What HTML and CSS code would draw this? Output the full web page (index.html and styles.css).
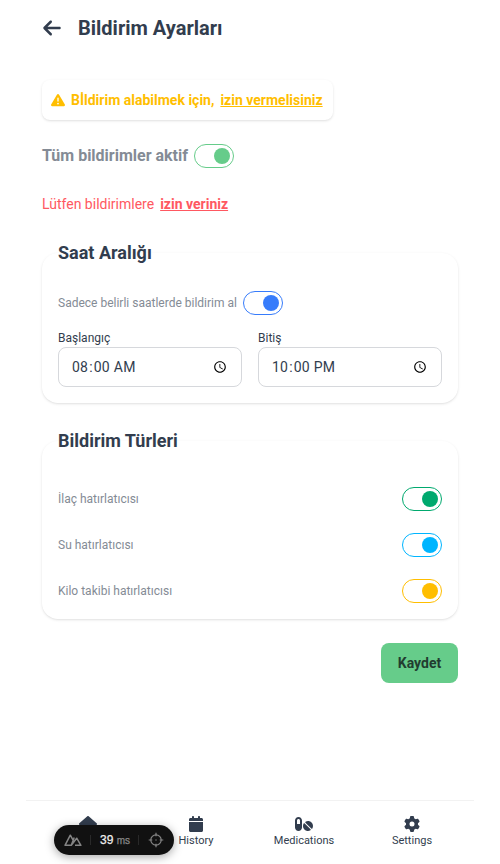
FILE: index.html
```html
<!DOCTYPE html>
<html lang="tr">
<head>
<meta charset="utf-8">
<title>Bildirim Ayarları</title>
<link rel="stylesheet" href="styles.css">
</head>
<body>
<div class="app">
  <header class="header">
    <svg class="back" viewBox="0 0 448 512"><path d="M9.400 233.400c-12.500 12.500-12.500 32.800 0 45.300l160 160c12.500 12.500 32.800 12.500 45.300 0s12.500-32.800 0-45.300L109.200 288 416 288c17.700 0 32-14.300 32-32s-14.300-32-32-32l-306.700 0L214.600 118.600c12.500-12.500 12.500-32.800 0-45.300s-32.800-12.500-45.300 0l-160 160z"/></svg>
    <h1>Bildirim Ayarları</h1>
  </header>
  <main class="content">
    <div class="alert">
      <svg class="warn" viewBox="0 0 512 512"><path d="M256 32c14.200 0 27.300 7.500 34.500 19.800l216 368c7.300 12.400 7.300 27.700 .2 40.100S486.300 480 472 480L40 480c-14.300 0-27.600-7.700-34.700-20.100s-7-27.800 .2-40.100l216-368C228.700 39.500 241.800 32 256 32zm0 128c-13.300 0-24 10.700-24 24l0 112c0 13.300 10.700 24 24 24s24-10.700 24-24l0-112c0-13.300-10.700-24-24-24zm32 224a32 32 0 1 0 -64 0 32 32 0 1 0 64 0z"/></svg>
      <span>Bİldirim alabilmek için,</span>
      <a class="link">izin vermelisiniz</a>
    </div>
    <label class="all"><span>Tüm bildirimler aktif</span><i class="toggle green"></i></label>
    <p class="error"><span>Lütfen bildirimlere</span><a class="link">izin veriniz</a></p>
    <fieldset class="card">
      <legend>Saat Aralığı</legend>
      <label class="row"><span>Sadece belirli saatlerde bildirim al</span><i class="toggle blue"></i></label>
      <div class="times">
        <label class="time"><span>Başlangıç</span><input type="time" value="08:00"></label>
        <label class="time"><span>Bitiş</span><input type="time" value="22:00"></label>
      </div>
    </fieldset>
    <fieldset class="card types">
      <legend>Bildirim Türleri</legend>
      <label class="row spread"><span>İlaç hatırlatıcısı</span><i class="toggle emerald"></i></label>
      <label class="row spread"><span>Su hatırlatıcısı</span><i class="toggle sky"></i></label>
      <label class="row spread"><span>Kilo takibi hatırlatıcısı</span><i class="toggle amber"></i></label>
    </fieldset>
    <button class="save">Kaydet</button>
  </main>
  <nav class="nav">
    <a class="tab"><svg width="18" height="16" viewBox="0 0 576 512"><path d="M575.800 255.500c0 18-15 32.100-32 32.100h-32l.7 160.200c0 35.300-28 64.200-64 64.200H352V352H224v160H128c-35.300 0-64-28.700-64-64V287.600H32c-18 0-32-14-32-32.100 0-9 3-17 10-24L266.400 8c7-7 15-8 22-8s15 2 21 7l255.400 224.500c8 7 12 15 11 24z"/></svg></a>
    <a class="tab"><svg width="14" height="16" viewBox="0 0 448 512"><path d="M96 32v32H48C21.500 64 0 85.500 0 112v48h448v-48c0-26.500-21.500-48-48-48h-48V32c0-17.700-14.300-32-32-32s-32 14.300-32 32v32H160V32c0-17.700-14.300-32-32-32S96 14.300 96 32zM448 192H0v272c0 26.500 21.500 48 48 48h352c26.500 0 48-21.500 48-48V192z"/></svg><span>History</span></a>
    <a class="tab"><svg width="18" height="16" viewBox="0 0 576 512"><path d="M112 96c-26.500 0-48 21.500-48 48v112h96V144c0-26.500-21.500-48-48-48zM0 144C0 82.100 50.100 32 112 32s112 50.100 112 112v224c0 61.900-50.100 112-112 112S0 429.900 0 368V144zM554.900 399.400c-7.100 12.300-23.700 13.100-33.800 3.100L333.500 214.900c-10-10-9.300-26.700 3.100-33.800C360 167.700 387.100 160 416 160c88.400 0 160 71.600 160 160 0 28.900-7.700 56-21.100 79.400zM495.400 458.900C472 472.300 444.900 480 416 480c-88.400 0-160-71.600-160-160 0-28.900 7.700-56 21.100-79.400 7.100-12.300 23.700-13.100 33.800-3.100l187.600 187.600c10 10 9.300 26.700-3.100 33.800z"/></svg><span>Medications</span></a>
    <a class="tab"><svg width="16" height="16" viewBox="0 0 512 512"><path d="M495.900 166.600c3.200 8.700 .5 18.400-6.400 24.600l-43.300 39.400c1.100 8.300 1.700 16.800 1.700 25.400s-.6 17.100-1.700 25.400l43.300 39.400c6.900 6.200 9.600 15.900 6.400 24.600-4.400 11.900-9.700 23.300-15.800 34.300l-4.700 8.100c-6.600 11-14 21.400-22.100 31.200-5.900 7.200-15.700 9.600-24.500 6.800l-55.700-17.700c-13.400 10.300-28.200 18.900-44 25.400l-12.500 57.100c-2 9.100-9 16.300-18.200 17.800-13.800 2.300-28 3.500-42.500 3.500s-28.700-1.200-42.500-3.500c-9.200-1.500-16.200-8.700-18.200-17.800l-12.500-57.100c-15.800-6.500-30.600-15.100-44-25.400L83.100 425.900c-8.800 2.800-18.600 .3-24.500-6.800-8.100-9.800-15.500-20.200-22.100-31.200l-4.700-8.100c-6.100-11-11.400-22.400-15.800-34.300-3.200-8.700-.5-18.400 6.400-24.600l43.300-39.400C64.600 273.100 64 264.600 64 256s.6-17.100 1.700-25.400L22.400 191.200c-6.900-6.200-9.600-15.900-6.400-24.600 4.400-11.900 9.700-23.300 15.800-34.300l4.700-8.100c6.600-11 14-21.400 22.100-31.200 5.900-7.200 15.700-9.600 24.500-6.800l55.700 17.700c13.400-10.300 28.200-18.900 44-25.400l12.500-57.100c2-9.100 9-16.300 18.200-17.800C227.300 1.200 241.500 0 256 0s28.700 1.200 42.500 3.500c9.200 1.500 16.200 8.700 18.200 17.800l12.500 57.100c15.800 6.500 30.600 15.100 44 25.400l55.700-17.700c8.800-2.800 18.600-.3 24.500 6.800 8.100 9.800 15.500 20.200 22.100 31.200l4.700 8.100c6.100 11 11.400 22.400 15.800 34.300zM256 336a80 80 0 1 0 0-160 80 80 0 1 0 0 160z"/></svg><span>Settings</span></a>
  </nav>
</div>
<div class="devtools">
  <svg class="peaks" width="18" height="14" viewBox="0 0 18 14"><path d="M5.500 12.300H1L6.300 2.200 8.800 6.700M5.500 12.300H7.300L12.700 5.200 16.900 12.300H11M7.300 12.300L10.200 4.500"/></svg>
  <i class="divider"></i>
  <span class="load">39 <small>ms</small></span>
  <i class="divider"></i>
  <svg width="16" height="16" viewBox="0 0 16 16"><circle cx="8" cy="8" r="5.200"/><path d="M8 .7v3.600M8 11.700v3.600M.7 8h3.600M11.700 8h3.600M7.300 8h1.400"/></svg>
</div>
</body>
</html>
```
FILE: styles.css
```css
* { box-sizing: border-box; }
body {
  margin: 0;
  background: #fff;
  color: #323d4e;
  font: 14px/20px Roboto, sans-serif;
}
svg { display: block; flex: none; fill: currentColor; }
.app {
  width: 448px;
  height: 864px;
  margin: 0 auto;
  display: flex;
  flex-direction: column;
}
.header {
  display: flex;
  align-items: center;
  gap: 16px;
  height: 56px;
  padding: 0 16px;
}
.back { width: 20px; height: 20px; }
h1 { margin: 0; font-size: 20px; line-height: 28px; font-weight: 700; }
.content {
  flex: 1;
  display: flex;
  flex-direction: column;
  align-items: flex-start;
  padding: 24px 16px 0;
}
.alert {
  display: flex;
  align-items: center;
  height: 40px;
  padding: 0 10px 0 9px;
  border-radius: 8px;
  color: #ffbe00;
  font-weight: 700;
  box-shadow: 0 1px 3px rgba(0,0,0,.1), 0 1px 2px -1px rgba(0,0,0,.1);
}
.warn { width: 14px; height: 14px; margin-right: 6px; }
.link { margin-left: 6px; font-weight: 700; text-decoration: underline; }
.all {
  display: flex;
  align-items: center;
  gap: 6px;
  height: 24px;
  margin-top: 24px;
  color: #848b95;
  font-size: 16px;
  font-weight: 700;
}
.toggle {
  width: 40px;
  height: 24px;
  padding: 3px;
  display: flex;
  justify-content: flex-end;
  border: 1px solid currentColor;
  border-radius: 12px;
}
.toggle::after {
  content: "";
  width: 16px;
  height: 16px;
  border-radius: 50%;
  background: currentColor;
}
.green { color: #66cc8a; }
.blue { color: #377cfb; }
.emerald { color: #00a96e; }
.sky { color: #00b5ff; }
.amber { color: #ffbe00; }
.error { display: flex; margin: 26px 0 1px; color: #ff5861; }
.card {
  width: 416px;
  min-width: 0;
  margin: 24px 0 0;
  padding: 24px 16px 16px;
  border: 0;
  border-radius: 16px;
  box-shadow: 0 1px 3px rgba(0,0,0,.1), 0 1px 2px -1px rgba(0,0,0,.1);
}
legend { padding: 0; font-size: 18px; line-height: 28px; font-weight: 700; }
.row {
  display: flex;
  align-items: center;
  gap: 6px;
  color: #848b95;
  font-size: 12px;
}
.spread { justify-content: space-between; }
.spread + .spread { margin-top: 22px; }
.times { display: flex; gap: 16px; margin-top: 15px; }
.time { flex: 1; display: flex; flex-direction: column; font-size: 12px; line-height: 16px; }
input {
  width: 100%;
  height: 40px;
  margin: 1px 0 0;
  padding: 0 12px;
  border: 1px solid #d6d8dc;
  border-radius: 8px;
  background: #fff;
  color: inherit;
  font: 14px/20px Roboto, sans-serif;
}
input::-webkit-calendar-picker-indicator { margin-right: -2px; }
input::-webkit-datetime-edit { letter-spacing: .2px; }
.types { padding-top: 32px; }
.save {
  align-self: flex-end;
  width: 77px;
  height: 40px;
  margin-top: 24px;
  padding: 0;
  border: 0;
  border-radius: 8px;
  background: #66cc8a;
  color: #223d30;
  font: 700 14px/20px Roboto, sans-serif;
}
.nav {
  display: flex;
  height: 64px;
  padding: 0 8px;
  border-top: 1px solid #f2f2f2;
}
.tab {
  flex: 1;
  display: flex;
  flex-direction: column;
  align-items: center;
  gap: 1px;
  padding-top: 15px;
  font-size: 11px;
  line-height: 16px;
}
.devtools {
  position: absolute;
  left: 54px;
  bottom: 9px;
  width: 120px;
  height: 30px;
  padding: 0 10px;
  display: flex;
  align-items: center;
  justify-content: space-between;
  border-radius: 15px;
  background: #111;
  color: #eee;
  font-family: "Liberation Sans", sans-serif;
  font-size: 12px;
  -webkit-text-stroke: .25px currentColor;
  box-shadow: 0 2px 10px rgba(0,0,0,.35);
}
.devtools svg { fill: none; stroke: #858585; stroke-width: 1.2; }
.devtools .peaks { stroke-width: 1.5; stroke-linejoin: round; }
.devtools small { font-size: 10px; color: #888; }
.divider { width: 1px; height: 10px; background: #292929; }
```
